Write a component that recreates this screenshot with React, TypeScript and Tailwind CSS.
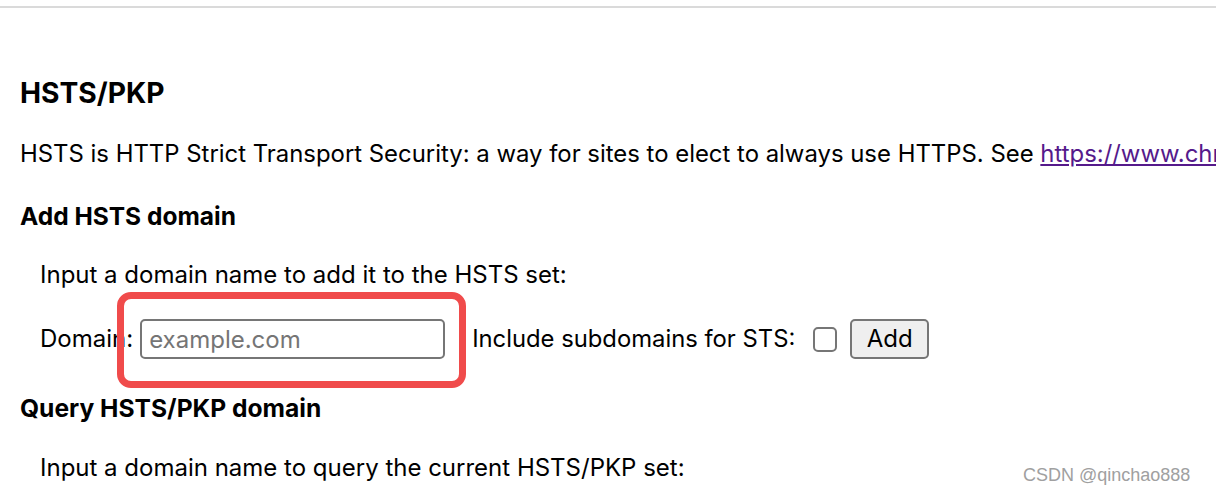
const font = { fontFamily: 'Inter, "Liberation Sans", Arial, sans-serif' };

export default function App() {
  return (
    <div className="relative w-[1216px] h-[496px] overflow-hidden bg-white text-black" style={font}>
      {/* top divider */}
      <div className="h-[6px]" />
      <div className="h-[2px] bg-[#dadada]" />

      <div className="px-[20px] whitespace-nowrap">
        <h3 className="mt-[68px] text-[28.2px] leading-[34px] font-bold">HSTS/PKP</h3>

        <p className="mt-[30px] text-[23.9px] leading-[28px]">
          HSTS is HTTP Strict Transport Security: a way for sites to elect to always use HTTPS. See{" "}
          <a className="text-[#551a8b] underline" href="#">
            https://www.chromium.org/hsts
          </a>
        </p>

        <h4 className="mt-[34px] text-[24.5px] leading-[28px] font-bold">Add HSTS domain</h4>

        <div className="pl-[20px]">
          <p className="mt-[31px] text-[24px] leading-[28px]">
            Input a domain name to add it to the HSTS set:
          </p>

          <div className="mt-[30px] flex items-center h-[40px] text-[24px] leading-[28px]">
            <span>Domain:</span>
            <input
              className="ml-[7px] w-[305px] h-[40px] border-2 border-[#767676] rounded-[5px] px-[7px] text-[24px] outline-none placeholder:text-[#757575]"
              placeholder="example.com"
              style={font}
            />
            <span className="ml-[27px] text-[23.8px]">Include subdomains for STS:</span>
            <div className="ml-[18px] w-[24px] h-[25px] border-2 border-[#767676] rounded-[5px] bg-white" />
            <button
              className="ml-[13px] w-[79px] h-[40px] bg-[#efefef] border-2 border-[#767676] rounded-[5px] text-[24px] leading-[28px]"
              style={font}
            >
              Add
            </button>
          </div>
        </div>

        <h4 className="mt-[35px] text-[24.6px] leading-[28px] font-bold">Query HSTS/PKP domain</h4>

        <div className="pl-[20px]">
          <p className="mt-[32px] text-[24px] leading-[28px]">
            Input a domain name to query the current HSTS/PKP set:
          </p>
        </div>
      </div>

      {/* highlight annotation */}
      <div className="absolute left-[117px] top-[292px] w-[349px] h-[96px] border-[7px] border-[#f04b4b] rounded-[14px]" />

      {/* watermark */}
      <div
        className="absolute left-[1023px] top-[464px] text-[18px] leading-[22px] text-[#a0a0a0]"
        style={{ fontFamily: '"Liberation Sans", Arial, sans-serif' }}
      >
        CSDN @qinchao888
      </div>
    </div>
  );
}
